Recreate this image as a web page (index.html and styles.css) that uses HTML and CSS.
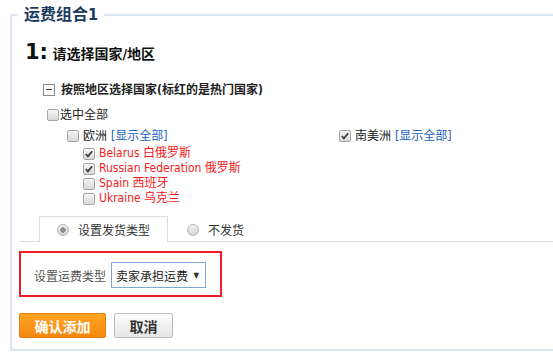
FILE: index.html
```html
<!DOCTYPE html>
<html lang="zh-CN">
<head>
    <meta charset="UTF-8">
    <title>运费组合</title>
    <link rel="stylesheet" href="styles.css">
</head>
<body>
    <fieldset class="group">
        <legend>运费组合1</legend>

        <h2 class="step"><span class="step-num">1:</span> 请选择国家/地区</h2>

        <div class="tree">
            <div class="tree-head"><span class="toggle"></span>按照地区选择国家(标红的是热门国家)</div>
            <label class="check-all"><span class="cb"></span>选中全部</label>

            <div class="regions">
                <div class="region">
                    <label class="region-name"><span class="cb"></span>欧洲 <a href="#">[显示全部]</a></label>
                    <ul class="countries">
                        <li><span class="cb checked"><svg viewBox="0 0 11 11"><path d="M2 5.5 L4.3 8 L9 2.5" /></svg></span>Belarus 白俄罗斯</li>
                        <li><span class="cb checked"><svg viewBox="0 0 11 11"><path d="M2 5.5 L4.3 8 L9 2.5" /></svg></span>Russian Federation 俄罗斯</li>
                        <li><span class="cb"></span>Spain 西班牙</li>
                        <li><span class="cb"></span>Ukraine 乌克兰</li>
                    </ul>
                </div>
                <div class="region">
                    <label class="region-name"><span class="cb checked"><svg viewBox="0 0 11 11"><path d="M2 5.5 L4.3 8 L9 2.5" /></svg></span>南美洲 <a href="#">[显示全部]</a></label>
                </div>
            </div>
        </div>

        <div class="tabs">
            <div class="tab active"><span class="radio on"></span>设置发货类型</div>
            <div class="tab"><span class="radio"></span>不发货</div>
        </div>

        <div class="fee-box">
            <span class="fee-label">设置运费类型</span>
            <div class="select">卖家承担运费<span class="arrow">▼</span></div>
        </div>

        <div class="actions">
            <button class="btn btn-primary">确认添加</button>
            <button class="btn btn-cancel">取消</button>
        </div>
    </fieldset>
</body>
</html>
```

FILE: styles.css
```css
body {
    margin: 0;
    font-family: "DejaVu Sans Condensed", "Liberation Sans", "Noto Sans CJK SC", sans-serif;
    font-size: 12px;
    color: #222;
    background: #fff;
}

.group {
    margin: 5px 0 0 10px;
    padding: 0 0 11px 0;
    border: 2px solid #dbe6f3;
    border-right: none;
    min-width: 0;
}

.group legend {
    margin-left: 6px;
    padding: 0 6px;
    font-size: 16px;
    line-height: 20px;
    font-weight: bold;
    color: #1b3b5e;
}

.step {
    margin: 15px 0 0 13px;
    font-size: 14px;
    line-height: 24px;
    font-weight: bold;
    color: #111;
}

.step-num {
    font-size: 21px;
    font-family: "DejaVu Sans", "Liberation Sans", sans-serif;
}

.tree {
    margin: 15px 0 0 31px;
}

.tree-head {
    display: flex;
    align-items: center;
    line-height: 18px;
    font-weight: bold;
    color: #222;
}

.toggle {
    position: relative;
    width: 10px;
    height: 10px;
    border: 1px solid #8a8a8a;
    margin-right: 6px;
    background: #fff;
}

.toggle::after {
    content: "";
    position: absolute;
    left: 2px;
    right: 2px;
    top: 4px;
    height: 1px;
    background: #444;
}

.cb {
    display: inline-block;
    box-sizing: border-box;
    width: 12px;
    height: 12px;
    border: 1px solid #a6a6a6;
    border-radius: 2px;
    background: linear-gradient(#f6f6f6, #d8d8d8);
    vertical-align: middle;
}

.cb svg {
    display: block;
    width: 10px;
    height: 10px;
}

.cb svg path {
    fill: none;
    stroke: #3c3c3c;
    stroke-width: 2;
}

.check-all {
    display: flex;
    align-items: center;
    margin: 7px 0 0 4px;
    line-height: 18px;
}

.check-all .cb {
    margin-right: 1px;
}

.regions {
    display: grid;
    grid-template-columns: 272px 1fr;
    margin: 3px 0 0 24px;
}

.region-name {
    display: flex;
    align-items: center;
    line-height: 18px;
    color: #222;
}

.region-name .cb {
    margin-right: 4px;
}

.region-name a {
    margin-left: 4px;
    color: #1a62c0;
    text-decoration: none;
}

.countries {
    list-style: none;
    margin: 1px 0 0 16px;
    padding: 0;
}

.countries li {
    display: flex;
    align-items: center;
    line-height: 15px;
    color: #f41a1a;
}

.countries .cb {
    margin-right: 4px;
}

.tabs {
    display: flex;
    margin: 10px 0 0 7px;
    padding-left: 20px;
    border-bottom: 1px solid #dcdcdc;
}

.tab {
    display: flex;
    align-items: center;
    height: 25px;
    padding: 0 17px 0 18px;
    color: #333;
    border: 1px solid transparent;
    border-bottom: none;
    margin-bottom: -1px;
}

.tab.active {
    border-color: #dcdcdc;
    background: #fff;
    padding-left: 17px;
}

.radio {
    box-sizing: border-box;
    width: 12px;
    height: 12px;
    margin-right: 9px;
    border: 1px solid #b4b4b4;
    border-radius: 50%;
    background: linear-gradient(#f2f2f2, #d4d4d4);
}

.radio.on {
    background: radial-gradient(circle, #8e8e8e 0 2.5px, transparent 3px), linear-gradient(#f2f2f2, #d4d4d4);
}

.fee-box {
    display: flex;
    align-items: center;
    width: 203px;
    box-sizing: border-box;
    margin: 9px 0 0 7px;
    padding: 9px 0 7px 13px;
    border: 2px solid #ee1c24;
}

.fee-label {
    color: #555;
    margin-right: 5px;
}

.select {
    display: flex;
    align-items: center;
    justify-content: space-between;
    box-sizing: border-box;
    width: 95px;
    height: 26px;
    padding: 0 6px 0 4px;
    border: 1px solid #7ea7dc;
    color: #222;
    background: #fff;
}

.arrow {
    font-size: 8px;
    color: #333;
}

.actions {
    display: flex;
    gap: 8px;
    margin: 16px 0 0 7px;
}

.btn {
    height: 25px;
    border-radius: 2px;
    font-family: "Liberation Sans", "Noto Sans CJK SC", sans-serif;
    font-size: 14px;
    font-weight: bold;
    cursor: pointer;
}

.btn-primary {
    width: 87px;
    color: #fff;
    border: 1px solid #e67d0b;
    background: linear-gradient(#ffa524, #f5870d);
}

.btn-cancel {
    width: 59px;
    color: #333;
    border: 1px solid #bdbdbd;
    background: linear-gradient(#fdfdfd, #e5e5e5);
}
```
